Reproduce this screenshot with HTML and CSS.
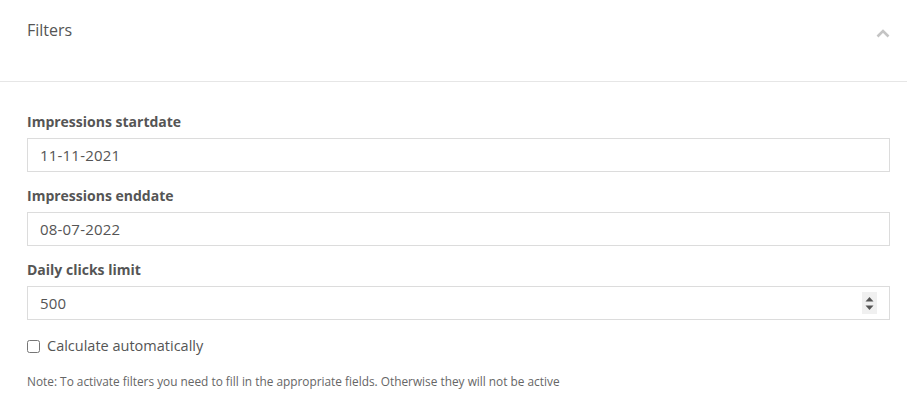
FILE: index.html
```html
<!DOCTYPE html>
<html>
<head>
<meta charset="utf-8">
<link rel="stylesheet" href="styles.css">
</head>
<body>
<div class="panel">
  <div class="panel-header">
    <span class="panel-title">Filters</span>
    <svg class="chevron" width="14" height="9" viewBox="0 0 14 9"><path d="M1.5 7.5 L7 2 L12.5 7.5" fill="none" stroke="#c4c4c4" stroke-width="2.6"/></svg>
  </div>
  <div class="panel-body">
    <div class="field">
      <label class="field-label">Impressions startdate</label>
      <div class="input">11-11-2021</div>
    </div>
    <div class="field">
      <label class="field-label">Impressions enddate</label>
      <div class="input">08-07-2022</div>
    </div>
    <div class="field">
      <label class="field-label">Daily clicks limit</label>
      <div class="input number">500
        <span class="spinner">
          <svg width="9" height="15" viewBox="0 0 9 15"><path d="M0.5 5.5 L4.5 1 L8.5 5.5 Z" fill="#555"/><path d="M0.5 9.5 L4.5 14 L8.5 9.5 Z" fill="#555"/></svg>
        </span>
      </div>
    </div>
    <label class="check-row"><input type="checkbox" class="check"><span>Calculate automatically</span></label>
    <p class="note">Note: To activate filters you need to fill in the appropriate fields. Otherwise they will not be active</p>
  </div>
</div>
</body>
</html>
```
FILE: styles.css
```css
* { box-sizing: border-box; }
body {
  margin: 0;
  background: #fff;
  font-family: "Open Sans", sans-serif;
  color: #555;
}
.panel { width: 907px; }
.panel-header {
  height: 82px;
  border-bottom: 1px solid #e6e6e6;
  display: flex;
  align-items: flex-start;
  justify-content: space-between;
  padding: 19px 17px 0 27px;
}
.panel-title {
  font-size: 16px;
  line-height: 22px;
  color: #555;
}
.chevron { margin-top: 10px; margin-right: 0; }
.panel-body {
  padding: 30px 17px 0 27px;
}
.field { margin-bottom: 14px; }
.field-label {
  display: block;
  font-size: 14px;
  font-weight: 700;
  line-height: 20px;
  color: #555;
  margin-bottom: 6px;
}
.input {
  position: relative;
  height: 34px;
  border: 1px solid #dcdcdc;
  padding: 0 12px;
  font-size: 15px;
  letter-spacing: 0.2px;
  line-height: 32px;
  color: #555;
}
.spinner {
  position: absolute;
  right: 12px;
  top: 5px;
  width: 15px;
  height: 22px;
  background: #f0f0f0;
  display: flex;
  align-items: center;
  justify-content: center;
}
.check-row {
  display: flex;
  align-items: center;
  gap: 7px;
  font-size: 14.5px;
  line-height: 20px;
  color: #555;
  margin-top: 16px;
}
.check {
  margin: 0;
  width: 13px;
  height: 13px;
}
.note {
  margin: 17px 0 0;
  font-size: 11.85px;
  line-height: 16px;
  color: #666;
}
```
